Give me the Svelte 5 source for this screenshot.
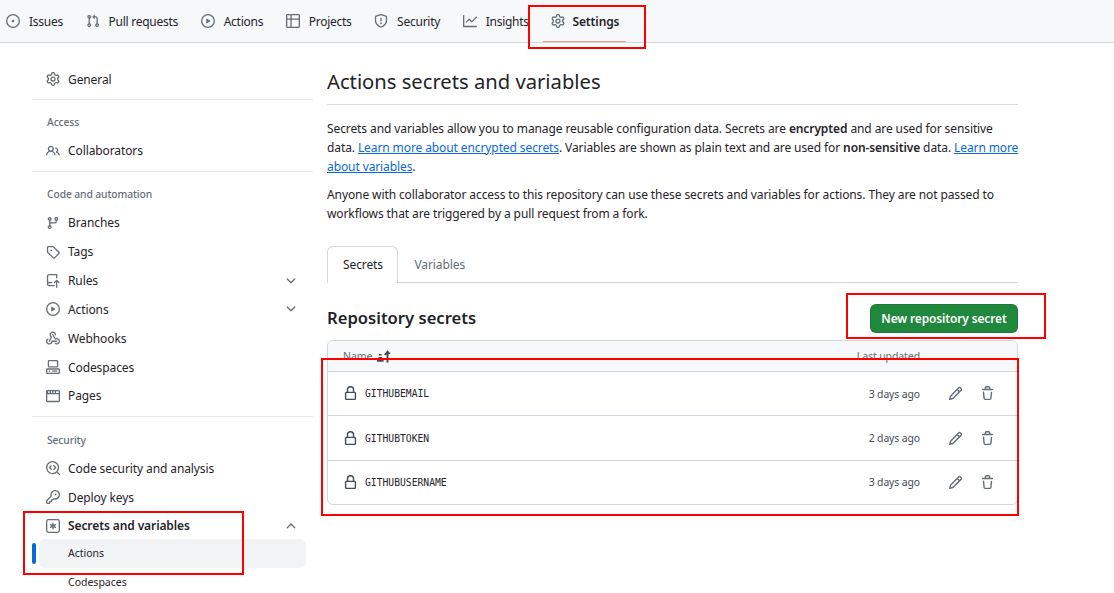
<script>
  const icons = {
    issue: 'M8 9.5a1.5 1.5 0 1 0 0-3 1.5 1.5 0 0 0 0 3Z M8 0a8 8 0 1 1 0 16A8 8 0 0 1 8 0ZM1.5 8a6.5 6.5 0 1 0 13 0 6.5 6.5 0 0 0-13 0Z',
    pull: 'M1.5 3.25a2.25 2.25 0 1 1 3 2.122v5.256a2.251 2.251 0 1 1-1.5 0V5.372A2.25 2.25 0 0 1 1.5 3.25Zm5.677-.177L9.573.677A.25.25 0 0 1 10 .854V2.5h1A2.5 2.5 0 0 1 13.5 5v5.628a2.251 2.251 0 1 1-1.5 0V5a1 1 0 0 0-1-1h-1v1.646a.25.25 0 0 1-.427.177L7.177 3.427a.25.25 0 0 1 0-.354ZM3.75 2.5a.75.75 0 1 0 0 1.5.75.75 0 0 0 0-1.5Zm0 9.5a.75.75 0 1 0 0 1.5.75.75 0 0 0 0-1.5Zm8.25.75a.75.75 0 1 0 1.5 0 .75.75 0 0 0-1.5 0Z',
    play: 'M8 0a8 8 0 1 1 0 16A8 8 0 0 1 8 0ZM1.5 8a6.5 6.5 0 1 0 13 0 6.5 6.5 0 0 0-13 0Zm4.879-2.773 4.264 2.559a.25.25 0 0 1 0 .428l-4.264 2.559A.25.25 0 0 1 6 10.559V5.442a.25.25 0 0 1 .379-.215Z',
    table: 'M0 1.75C0 .784.784 0 1.75 0h12.5C15.216 0 16 .784 16 1.75v12.5A1.75 1.75 0 0 1 14.25 16H1.75A1.75 1.75 0 0 1 0 14.25ZM6.5 6.5v8h7.75a.25.25 0 0 0 .25-.25V6.5Zm8-1.5V1.75a.25.25 0 0 0-.25-.25H6.5V5Zm-13 1.5v7.75c0 .138.112.25.25.25H5v-8ZM5 5V1.5H1.75a.25.25 0 0 0-.25.25V5Z',
    shield: 'M7.467.133a1.748 1.748 0 0 1 1.066 0l5.25 1.68A1.75 1.75 0 0 1 15 3.48V7c0 1.566-.32 3.182-1.303 4.682-.983 1.498-2.585 2.813-5.032 3.855a1.697 1.697 0 0 1-1.33 0c-2.447-1.042-4.049-2.357-5.032-3.855C1.32 10.182 1 8.566 1 7V3.48a1.75 1.75 0 0 1 1.217-1.667Zm.61 1.429a.25.25 0 0 0-.153 0l-5.25 1.68a.25.25 0 0 0-.174.238V7c0 1.358.275 2.666 1.057 3.86.784 1.194 2.121 2.34 4.366 3.297a.196.196 0 0 0 .154 0c2.245-.956 3.582-2.104 4.366-3.298C13.225 9.666 13.5 8.36 13.5 7V3.48a.251.251 0 0 0-.174-.237l-5.25-1.68ZM8.75 4.75v3a.75.75 0 0 1-1.5 0v-3a.75.75 0 0 1 1.5 0ZM9 10.5a1 1 0 1 1-2 0 1 1 0 0 1 2 0Z',
    graph: 'M1.5 1.75V13.5h13.75a.75.75 0 0 1 0 1.5H.75a.75.75 0 0 1-.75-.75V1.75a.75.75 0 0 1 1.5 0Zm14.28 2.53-5.25 5.25a.75.75 0 0 1-1.06 0L7 7.06 4.28 9.78a.751.751 0 0 1-1.042-.018.751.751 0 0 1-.018-1.042l3.25-3.25a.75.75 0 0 1 1.06 0L10 7.94l4.72-4.72a.751.751 0 0 1 1.042.018.751.751 0 0 1 .018 1.042Z',
    gear: 'M8 0a8.2 8.2 0 0 1 .701.031C9.444.095 9.99.645 10.16 1.29l.288 1.107c.018.066.079.158.212.224.231.114.454.243.668.386.123.082.233.09.299.071l1.103-.303c.644-.176 1.392.021 1.82.63.27.385.506.792.704 1.218.315.675.111 1.422-.364 1.891l-.814.806c-.049.048-.098.147-.088.294.016.257.016.515 0 .772-.01.147.038.246.088.294l.814.806c.475.469.679 1.216.364 1.891a7.977 7.977 0 0 1-.704 1.217c-.428.61-1.176.807-1.82.63l-1.102-.302c-.067-.019-.177-.011-.3.071a5.909 5.909 0 0 1-.668.386c-.133.066-.194.158-.211.224l-.29 1.106c-.168.646-.715 1.196-1.458 1.26a8.006 8.006 0 0 1-1.402 0c-.743-.064-1.289-.614-1.458-1.26l-.289-1.106c-.018-.066-.079-.158-.212-.224a5.738 5.738 0 0 1-.668-.386c-.123-.082-.233-.09-.299-.071l-1.103.303c-.644.176-1.392-.021-1.82-.63a8.12 8.12 0 0 1-.704-1.218c-.315-.675-.111-1.422.363-1.891l.815-.806c.05-.048.098-.147.088-.294a6.214 6.214 0 0 1 0-.772c.01-.147-.038-.246-.088-.294l-.815-.806C.635 6.045.431 5.298.746 4.623a7.92 7.92 0 0 1 .704-1.217c.428-.61 1.176-.807 1.82-.63l1.102.302c.067.019.177.011.3-.071.214-.143.437-.272.668-.386.133-.066.194-.158.211-.224l.29-1.106C6.009.645 6.556.095 7.299.03 7.53.01 7.764 0 8 0Zm-.571 1.525c-.036.003-.108.036-.137.146l-.289 1.105c-.147.561-.549.967-.998 1.189-.173.086-.34.183-.5.29-.417.278-.97.423-1.529.27l-1.103-.303c-.109-.03-.175.016-.195.045-.22.312-.412.644-.573.99-.014.031-.021.11.059.19l.815.806c.411.406.562.957.53 1.456a4.709 4.709 0 0 0 0 .582c.032.499-.119 1.05-.53 1.456l-.815.806c-.081.08-.073.159-.059.19.162.346.353.677.573.989.02.03.085.076.195.046l1.102-.303c.56-.153 1.113-.008 1.53.27.161.107.328.204.501.29.447.222.85.629.997 1.189l.289 1.105c.029.109.101.143.137.146a6.6 6.6 0 0 0 1.142 0c.036-.003.108-.036.137-.146l.289-1.105c.147-.561.549-.967.998-1.189.173-.086.34-.183.5-.29.417-.278.97-.423 1.529-.27l1.103.303c.109.029.175-.016.195-.045.22-.313.411-.644.573-.99.014-.031.021-.11-.059-.19l-.815-.806c-.411-.406-.562-.957-.53-1.456a4.709 4.709 0 0 0 0-.582c-.032-.499.119-1.05.53-1.456l.815-.806c.081-.08.073-.159.059-.19a6.464 6.464 0 0 0-.573-.989c-.02-.03-.085-.076-.195-.046l-1.102.303c-.56.153-1.113.008-1.53-.27a4.44 4.44 0 0 0-.501-.29c-.447-.222-.85-.629-.997-1.189l-.289-1.105c-.029-.11-.101-.143-.137-.146a6.6 6.6 0 0 0-1.142 0ZM11 8a3 3 0 1 1-6 0 3 3 0 0 1 6 0ZM9.5 8a1.5 1.5 0 1 0-3.001.001A1.5 1.5 0 0 0 9.5 8Z',
    people: 'M2 5.5a3.5 3.5 0 1 1 5.898 2.549 5.508 5.508 0 0 1 3.034 4.084.75.75 0 1 1-1.482.235 4 4 0 0 0-7.9 0 .75.75 0 0 1-1.482-.236A5.507 5.507 0 0 1 3.102 8.05 3.493 3.493 0 0 1 2 5.5ZM11 4a3.001 3.001 0 0 1 2.22 5.018 5.01 5.01 0 0 1 2.56 3.012.749.749 0 0 1-.885.954.752.752 0 0 1-.549-.514 3.507 3.507 0 0 0-2.522-2.372.75.75 0 0 1-.574-.73v-.352a.75.75 0 0 1 .416-.672A1.5 1.5 0 0 0 11 5.5.75.75 0 0 1 11 4Zm-5.5-.5a2 2 0 1 0-.001 3.999A2 2 0 0 0 5.5 3.5Z',
    branch: 'M9.5 3.25a2.25 2.25 0 1 1 3 2.122V6A2.5 2.5 0 0 1 10 8.5H6a1 1 0 0 0-1 1v1.128a2.251 2.251 0 1 1-1.5 0V5.372a2.25 2.25 0 1 1 1.5 0v1.836A2.493 2.493 0 0 1 6 7h4a1 1 0 0 0 1-1v-.628A2.25 2.25 0 0 1 9.5 3.25Zm-6 0a.75.75 0 1 0 1.5 0 .75.75 0 0 0-1.5 0Zm8.25-.75a.75.75 0 1 0 0 1.5.75.75 0 0 0 0-1.5ZM4.25 12a.75.75 0 1 0 0 1.5.75.75 0 0 0 0-1.5Z',
    tag: 'M1 7.775V2.75C1 1.784 1.784 1 2.75 1h5.025c.464 0 .91.184 1.238.513l6.25 6.25a1.75 1.75 0 0 1 0 2.474l-5.026 5.026a1.75 1.75 0 0 1-2.474 0l-6.25-6.25A1.752 1.752 0 0 1 1 7.775Zm1.5 0c0 .066.026.13.073.177l6.25 6.25a.25.25 0 0 0 .354 0l5.025-5.025a.25.25 0 0 0 0-.354l-6.25-6.25a.25.25 0 0 0-.177-.073H2.75a.25.25 0 0 0-.25.25ZM6 5a1 1 0 1 1 0 2 1 1 0 0 1 0-2Z',
    rules: 'M1 2.5A2.5 2.5 0 0 1 3.5 0h8.75a.75.75 0 0 1 .75.75v3.5a.75.75 0 0 1-1.5 0V1.5h-8a1 1 0 0 0-1 1v6.708A2.493 2.493 0 0 1 3.5 9h3.25a.75.75 0 0 1 0 1.5H3.5a1 1 0 0 0 0 2h5.75a.75.75 0 0 1 0 1.5H3.5A2.5 2.5 0 0 1 1 11.5Zm13.23 7.79h-.001l-1.224-1.224v6.184a.75.75 0 0 1-1.5 0V9.066L10.28 10.29a.75.75 0 0 1-1.06-1.06l2.505-2.504a.75.75 0 0 1 1.06 0L15.29 9.23a.751.751 0 0 1-.018 1.042.751.751 0 0 1-1.042.018Z',
    webhook: 'M5.5 4.25a2.25 2.25 0 0 1 4.5 0 .75.75 0 0 0 1.5 0 3.75 3.75 0 1 0-6.14 2.889l-2.272 4.258a.75.75 0 0 0 1.324.706L7 7.25a.75.75 0 0 0-.309-1.015A2.25 2.25 0 0 1 5.5 4.25Z M7.364 3.607a.75.75 0 0 1 1.03.257l2.608 4.349a3.75 3.75 0 1 1-.628 6.785.75.75 0 0 1 .752-1.299 2.25 2.25 0 1 0-.033-3.88.75.75 0 0 1-1.03-.256L7.107 4.636a.75.75 0 0 1 .257-1.03Z M2.9 8.776A.75.75 0 0 1 2.625 9.8 2.25 2.25 0 1 0 6 11.75a.75.75 0 0 1 .75-.751h5.5a.75.75 0 0 1 0 1.5H7.425a3.751 3.751 0 1 1-5.55-3.998.75.75 0 0 1 1.024.274Z',
    codespaces: 'M0 11.25c0-.966.784-1.75 1.75-1.75h12.5c.966 0 1.75.784 1.75 1.75v3A1.75 1.75 0 0 1 14.25 16H1.75A1.75 1.75 0 0 1 0 14.25Zm2-9.5C2 .784 2.784 0 3.75 0h8.5C13.216 0 14 .784 14 1.75v5a1.75 1.75 0 0 1-1.75 1.75h-8.5A1.75 1.75 0 0 1 2 6.75Zm1.75-.25a.25.25 0 0 0-.25.25v5c0 .138.112.25.25.25h8.5a.25.25 0 0 0 .25-.25v-5a.25.25 0 0 0-.25-.25Zm-2 9.5a.25.25 0 0 0-.25.25v3c0 .138.112.25.25.25h12.5a.25.25 0 0 0 .25-.25v-3a.25.25 0 0 0-.25-.25Z M7 12.75a.75.75 0 0 1 .75-.75h4.5a.75.75 0 0 1 0 1.5h-4.5a.75.75 0 0 1-.75-.75Zm-4 0a.75.75 0 0 1 .75-.75h.5a.75.75 0 0 1 0 1.5h-.5a.75.75 0 0 1-.75-.75Z',
    browser: 'M0 2.75C0 1.784.784 1 1.75 1h12.5c.966 0 1.75.784 1.75 1.75v10.5A1.75 1.75 0 0 1 14.25 15H1.75A1.75 1.75 0 0 1 0 13.25ZM14.5 6h-13v7.25c0 .138.112.25.25.25h12.5a.25.25 0 0 0 .25-.25Zm-6-3.500v2H10v-2Zm-3 0v2H7v-2Zm-3 0v2H4v-2Zm9 0v2h3V2.750a.25.25 0 0 0-.25-.25Z',
    codescan: 'M8.47 4.97a.75.75 0 0 0 0 1.06L9.94 7.5 8.47 8.97a.75.75 0 1 0 1.06 1.06l2-2a.75.75 0 0 0 0-1.06l-2-2a.75.75 0 0 0-1.06 0ZM6.53 6.03a.75.75 0 0 0-1.06-1.06l-2 2a.75.75 0 0 0 0 1.06l2 2a.75.75 0 1 0 1.06-1.06L5.06 7.5l1.47-1.47Z M12.246 13.307a7.501 7.501 0 1 1 1.06-1.06l2.474 2.473a.749.749 0 0 1-.326 1.275.749.749 0 0 1-.734-.215ZM1.5 7.5a6.002 6.002 0 0 0 3.608 5.504 6.002 6.002 0 0 0 6.486-1.117.748.748 0 0 1 .292-.293A6 6 0 1 0 1.5 7.5Z',
    key: 'M10.5 0a5.499 5.499 0 1 1-1.288 10.848l-.932.932a.749.749 0 0 1-.53.22H7v.75a.749.749 0 0 1-.22.53l-.5.5a.749.749 0 0 1-.53.22H5v.75a.749.749 0 0 1-.22.53l-.5.5a.749.749 0 0 1-.53.22h-2A1.75 1.75 0 0 1 0 14.25v-2c0-.199.079-.389.22-.53l4.932-4.932A5.5 5.5 0 0 1 10.5 0Zm-4 5.5c-.001.431.069.86.205 1.269a.75.75 0 0 1-.181.768L1.5 12.56v1.69c0 .138.112.25.25.25h1.69l.06-.06v-1.19a.75.75 0 0 1 .75-.75h1.19l.06-.06v-1.19a.75.75 0 0 1 .75-.75h1.19l1.023-1.025a.75.75 0 0 1 .768-.18A4 4 0 1 0 6.5 5.5ZM11 6a1 1 0 1 1 0-2 1 1 0 0 1 0 2Z',
    asterisk: 'M0 2.75A2.75 2.75 0 0 1 2.75 0h10.5A2.75 2.75 0 0 1 16 2.75v10.5A2.75 2.75 0 0 1 13.25 16H2.75A2.75 2.75 0 0 1 0 13.25ZM2.75 1.5c-.69 0-1.25.56-1.25 1.25v10.5c0 .69.56 1.25 1.25 1.25h10.5c.69 0 1.25-.56 1.25-1.25V2.75c0-.69-.56-1.25-1.25-1.25Z M8 4a.75.75 0 0 1 .75.75V6.7l1.69-.975a.75.75 0 0 1 .75 1.3L9.5 8l1.69.976a.75.75 0 0 1-.75 1.298L8.75 9.3v1.951a.75.75 0 0 1-1.5 0V9.299l-1.69.976a.75.75 0 0 1-.75-1.3L6.5 8l-1.69-.975a.75.75 0 0 1 .75-1.3l1.69.976V4.75A.75.75 0 0 1 8 4Z',
    lock: 'M4 4a4 4 0 0 1 8 0v2h.25c.966 0 1.75.784 1.75 1.75v5.5A1.75 1.75 0 0 1 12.25 15h-8.5A1.75 1.75 0 0 1 2 13.25v-5.5C2 6.784 2.784 6 3.75 6H4Zm8.25 3.5h-8.5a.25.25 0 0 0-.25.25v5.5c0 .138.112.25.25.25h8.5a.25.25 0 0 0 .25-.25v-5.5a.25.25 0 0 0-.25-.25ZM10.5 6V4a2.5 2.5 0 1 0-5 0v2Z',
    pencil: 'M11.013 1.427a1.75 1.75 0 0 1 2.474 0l1.086 1.086a1.75 1.75 0 0 1 0 2.474l-8.61 8.61c-.21.21-.47.364-.756.445l-3.251.93a.75.75 0 0 1-.927-.928l.929-3.25c.081-.286.235-.547.445-.758l8.61-8.61Zm.176 4.823L9.75 4.81l-6.286 6.287a.253.253 0 0 0-.064.108l-.558 1.953 1.953-.558a.253.253 0 0 0 .108-.064Zm1.238-3.763a.25.25 0 0 0-.354 0L10.811 3.75l1.439 1.44 1.263-1.263a.25.25 0 0 0 0-.354Z',
    trash: 'M11 1.75V3h2.25a.75.75 0 0 1 0 1.5H2.75a.75.75 0 0 1 0-1.5H5V1.75C5 .784 5.784 0 6.75 0h2.5C10.216 0 11 .784 11 1.75ZM4.496 6.675l.66 6.6a.25.25 0 0 0 .249.225h5.19a.25.25 0 0 0 .249-.225l.66-6.6a.75.75 0 0 1 1.492.149l-.66 6.6A1.748 1.748 0 0 1 10.595 15h-5.19a1.75 1.75 0 0 1-1.741-1.575l-.66-6.6a.75.75 0 1 1 1.492-.15ZM6.5 1.75V3h3V1.75a.25.25 0 0 0-.25-.25h-2.5a.25.25 0 0 0-.25.25Z',
    down: 'M12.78 5.22a.749.749 0 0 1 0 1.06l-4.25 4.25a.749.749 0 0 1-1.06 0L3.22 6.28a.749.749 0 1 1 1.06-1.06L8 8.939l3.72-3.719a.749.749 0 0 1 1.06 0Z',
    up: 'M3.22 10.53a.749.749 0 0 1 0-1.06l4.25-4.25a.749.749 0 0 1 1.06 0l4.25 4.25a.749.749 0 1 1-1.06 1.06L8 6.811 4.28 10.53a.749.749 0 0 1-1.06 0Z',
    sort: 'M0 12.500h7.500v2H0Zm1.500-3.500h4.500v1.500H1.500Zm.8-3.200h3v1.500h-3Zm9.700-4.300 3.800 4.300h-2.700v9.500h-2.200V6.800H7.800Z',
  };

  const tabs = [
    { label: 'Issues', icon: 'issue' },
    { label: 'Pull requests', icon: 'pull' },
    { label: 'Actions', icon: 'play' },
    { label: 'Projects', icon: 'table' },
    { label: 'Security', icon: 'shield' },
    { label: 'Insights', icon: 'graph' },
    { label: 'Settings', icon: 'gear', active: true },
  ];

  const nav = [
    { items: [{ label: 'General', icon: 'gear' }] },
    { title: 'Access', items: [{ label: 'Collaborators', icon: 'people' }] },
    {
      title: 'Code and automation',
      items: [
        { label: 'Branches', icon: 'branch' },
        { label: 'Tags', icon: 'tag' },
        { label: 'Rules', icon: 'rules', chevron: 'down' },
        { label: 'Actions', icon: 'play', chevron: 'down' },
        { label: 'Webhooks', icon: 'webhook' },
        { label: 'Codespaces', icon: 'codespaces' },
        { label: 'Pages', icon: 'browser' },
      ],
    },
    {
      title: 'Security',
      items: [
        { label: 'Code security and analysis', icon: 'codescan' },
        { label: 'Deploy keys', icon: 'key' },
        { label: 'Secrets and variables', icon: 'asterisk', chevron: 'up', strong: true },
      ],
      subs: [{ label: 'Actions', current: true }, { label: 'Codespaces' }],
    },
  ];

  const secrets = [
    { name: 'GITHUBEMAIL', updated: '3 days ago' },
    { name: 'GITHUBTOKEN', updated: '2 days ago' },
    { name: 'GITHUBUSERNAME', updated: '3 days ago' },
  ];
</script>

{#snippet icon(name, size = 16)}
  <svg class="icon" width={size} height={size} viewBox="0 0 16 16" fill="currentColor" aria-hidden="true">
    <path d={icons[name]} />
  </svg>
{/snippet}

<div class="page">
  <nav class="tabbar">
    {#each tabs as t}
      <span class="tab" class:active={t.active}>
        {@render icon(t.icon, 14)}
        <span>{t.label}</span>
      </span>
    {/each}
  </nav>

  <div class="layout">
    <aside class="side">
      {#each nav as group, i}
        <div class="group" class:first={i === 0}>
          {#if group.title}
            <h3>{group.title}</h3>
          {/if}
          {#each group.items as item}
            <div class="item" class:strong={item.strong}>
              <span class="item-icon">{@render icon(item.icon, 14)}</span>
              <span class="item-label">{item.label}</span>
              {#if item.chevron}
                <span class="chev">{@render icon(item.chevron, 14)}</span>
              {/if}
            </div>
          {/each}
          {#each group.subs ?? [] as sub}
            <div class="sub" class:current={sub.current}>{sub.label}</div>
          {/each}
        </div>
      {/each}
    </aside>

    <main class="main">
      <h1>Actions secrets and variables</h1>
      <p class="first-p">
        Secrets and variables allow you to manage reusable configuration data. Secrets are <b>encrypted</b> and are used for sensitive
        data. <a href="#a">Learn more about encrypted secrets</a>. Variables are shown as plain text and are used for <b>non-sensitive</b> data. <a href="#b">Learn more
        about variables</a>.
      </p>
      <p>
        Anyone with collaborator access to this repository can use these secrets and variables for actions. They are not passed to
        workflows that are triggered by a pull request from a fork.
      </p>

      <div class="subtabs">
        <span class="subtab selected">Secrets</span>
        <span class="subtab">Variables</span>
      </div>

      <div class="section-head">
        <h2>Repository secrets</h2>
        <button type="button">New repository secret</button>
      </div>

      <div class="box">
        <div class="box-head">
          <span class="name-col">Name <span class="sort">{@render icon('sort', 14)}</span></span>
          <span>Last updated</span>
        </div>
        {#each secrets as s}
          <div class="row">
            <span class="lock">{@render icon('lock', 15)}</span>
            <code>{s.name}</code>
            <span class="updated">{s.updated}</span>
            <span class="acts">
              {@render icon('pencil', 15)}
              {@render icon('trash', 15)}
            </span>
          </div>
        {/each}
      </div>
    </main>
  </div>

  <!-- annotation boxes drawn over the screenshot -->
  <div class="mark m-settings"></div>
  <div class="mark m-secrets"></div>
  <div class="mark m-button"></div>
  <div class="mark m-table"></div>
</div>

<style>
  :global(body) {
    margin: 0;
    background: #fff;
  }
  .page {
    position: relative;
    width: 1114px;
    height: 593px;
    overflow: hidden;
    font-family: 'Noto Sans', 'Open Sans', sans-serif;
    font-size: 12px;
    letter-spacing: -0.1px;
    color: #1f2328;
  }
  .icon {
    display: block;
    flex-shrink: 0;
  }

  .tabbar {
    display: flex;
    height: 43px;
    box-sizing: border-box;
    padding-left: 6px;
    gap: 22.5px;
    background: #f6f8fa;
    border-bottom: 1px solid #d0d7de;
    letter-spacing: -0.25px;
  }
  .tab {
    display: flex;
    align-items: center;
    gap: 9px;
    height: 42px;
    position: relative;
  }
  .tab .icon {
    color: #656d76;
  }
  .tab.active {
    gap: 7px;
    font-weight: 600;
    letter-spacing: -0.1px;
  }
  .tab.active::after {
    content: '';
    position: absolute;
    left: -8px;
    right: -7px;
    bottom: 0;
    height: 1px;
    background: #f0a090;
  }

  .layout {
    display: flex;
    gap: 14px;
    padding-left: 32px;
  }
  .side {
    width: 281px;
    flex-shrink: 0;
    padding-top: 22px;
  }
  .group {
    border-top: 1px solid #e6e9ec;
    padding: 11.4px 0 6px;
  }
  .group.first {
    border-top: 0;
    padding: 0 0 5px;
  }
  h3 {
    margin: 0;
    padding: 3px 15px 6px;
    font-size: 10.3px;
    line-height: 16px;
    font-weight: 500;
    color: #656d76;
  }
  .item {
    display: flex;
    align-items: center;
    height: 28.85px;
    padding: 0 15px 0 14px;
  }
  .item-icon {
    width: 22px;
    color: #656d76;
  }
  .item-label {
    flex: 1;
  }
  .item.strong .item-label {
    font-weight: 600;
  }
  .chev {
    color: #656d76;
  }
  .sub {
    height: 29px;
    line-height: 29px;
    margin: 0 7px;
    padding-left: 29px;
    font-size: 10.5px;
    letter-spacing: 0;
    position: relative;
  }
  .sub.current {
    margin-top: -1px;
    background: #f1f3f5;
    border-radius: 6px;
  }
  .sub.current::before {
    content: '';
    position: absolute;
    left: -7px;
    top: 4px;
    width: 4px;
    height: 21px;
    border-radius: 4px;
    background: #0969da;
  }

  .main {
    width: 691px;
    padding-top: 22px;
  }
  h1 {
    margin: 0;
    height: 40px;
    box-sizing: border-box;
    font-size: 20.2px;
    line-height: 33px;
    font-weight: 400;
    letter-spacing: 0;
    border-bottom: 1px solid #d8dee4;
  }
  p {
    margin: 0 -4px 9px 0;
    line-height: 19px;
  }
  .first-p {
    margin-top: 14px;
  }
  a {
    color: #0969da;
    text-decoration: underline;
  }
  b {
    font-weight: 600;
  }

  .subtabs {
    display: flex;
    margin-top: 23px;
    height: 36px;
    border-bottom: 1px solid #d0d7de;
  }
  .subtab {
    height: 36px;
    box-sizing: border-box;
    padding: 0 15px;
    line-height: 36px;
    color: #656d76;
    border: 1px solid transparent;
    border-bottom: 0;
  }
  .subtab.selected {
    color: #1f2328;
    background: #fff;
    height: 37px;
    padding: 0 14.5px 0 15px;
    border-color: #d0d7de;
    border-radius: 6px 6px 0 0;
  }

  .section-head {
    display: flex;
    align-items: center;
    justify-content: space-between;
    margin-top: 20px;
    height: 30px;
  }
  h2 {
    margin: 0;
    font-size: 16.6px;
    font-weight: 600;
    line-height: 30px;
    letter-spacing: 0;
  }
  button {
    width: 148px;
    height: 29px;
    padding: 0;
    border: 1px solid rgba(31, 35, 40, 0.15);
    border-radius: 6px;
    background: #1f883d;
    color: #fff;
    font: 600 11.9px 'Noto Sans', sans-serif;
    letter-spacing: -0.1px;
  }

  .box {
    margin-top: 7px;
    border: 1px solid #d0d7de;
    border-radius: 6px;
    overflow: hidden;
  }
  .box-head {
    display: flex;
    align-items: center;
    justify-content: space-between;
    box-sizing: border-box;
    height: 31px;
    padding: 0 97px 0 15px;
    background: #f6f8fa;
    font-size: 10.5px;
    color: #656d76;
    border-bottom: 1px solid #d0d7de;
  }
  .name-col {
    display: flex;
    align-items: center;
    gap: 5px;
  }
  .sort {
    color: #424a53;
  }
  .row {
    display: flex;
    align-items: center;
    box-sizing: border-box;
    height: 44.4px;
    padding-left: 15px;
    border-bottom: 1px solid #d0d7de;
    font-size: 10.4px;
  }
  .row:last-child {
    height: 43px;
    border-bottom: 0;
  }
  .lock {
    width: 22px;
    color: #424a53;
  }
  code {
    flex: 1;
    font-family: 'DejaVu Sans Mono', monospace;
    font-size: 9.7px;
    letter-spacing: 0;
  }
  .updated {
    margin-right: 28px;
    color: #424a53;
  }
  .acts {
    display: flex;
    gap: 17px;
    width: 47px;
    margin-right: 22px;
    color: #656d76;
  }

  .mark {
    position: absolute;
    box-sizing: border-box;
    border: 2px solid #f00;
    pointer-events: none;
  }
  .m-settings {
    left: 528px;
    top: 5px;
    width: 118px;
    height: 44px;
  }
  .m-secrets {
    left: 23px;
    top: 511px;
    width: 221px;
    height: 64px;
  }
  .m-button {
    left: 846px;
    top: 293px;
    width: 200px;
    height: 46px;
  }
  .m-table {
    left: 321px;
    top: 358px;
    width: 698px;
    height: 158px;
  }
</style>
